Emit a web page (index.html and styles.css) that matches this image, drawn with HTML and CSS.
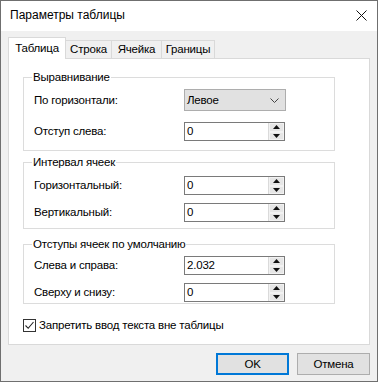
FILE: index.html
```html
<!DOCTYPE html>
<html lang="ru">
<head>
<meta charset="utf-8">
<title>Параметры таблицы</title>
<link rel="stylesheet" href="styles.css">
</head>
<body>
<div class="window">
  <div class="titlebar">
    <span class="title">Параметры таблицы</span>
    <svg class="close" width="11" height="11" viewBox="0 0 11 11"><path d="M0.5 0.5L10.5 10.5M10.5 0.5L0.5 10.5" stroke="#111" stroke-width="1"/></svg>
  </div>
  <div class="body">
    <div class="tabs">
      <div class="tab active w1">Таблица</div>
      <div class="tab w2">Строка</div>
      <div class="tab w3">Ячейка</div>
      <div class="tab w4">Границы</div>
    </div>
    <div class="panel">
      <div class="group g1">
        <div class="legend">Выравнивание</div>
        <div class="row r1a">
          <span class="label">По горизонтали:</span>
          <div class="select"><span>Левое</span><svg width="9" height="5" viewBox="0 0 9 5"><path d="M0.5 0.5L4.5 4.5L8.5 0.5" fill="none" stroke="#444" stroke-width="1"/></svg></div>
        </div>
        <div class="row r1b">
          <span class="label">Отступ слева:</span>
          <div class="spin"><span class="val">0</span><div class="spinbtns"><div class="sb"><svg width="7" height="4" viewBox="0 0 7 4"><path d="M3.5 0L7 4H0Z" fill="#111"/></svg></div><div class="sb"><svg width="7" height="4" viewBox="0 0 7 4"><path d="M0 0H7L3.5 4Z" fill="#111"/></svg></div></div></div>
        </div>
      </div>
      <div class="group g2">
        <div class="legend">Интервал ячеек</div>
        <div class="row r2a">
          <span class="label">Горизонтальный:</span>
          <div class="spin"><span class="val">0</span><div class="spinbtns"><div class="sb"><svg width="7" height="4" viewBox="0 0 7 4"><path d="M3.5 0L7 4H0Z" fill="#111"/></svg></div><div class="sb"><svg width="7" height="4" viewBox="0 0 7 4"><path d="M0 0H7L3.5 4Z" fill="#111"/></svg></div></div></div>
        </div>
        <div class="row r2b">
          <span class="label">Вертикальный:</span>
          <div class="spin"><span class="val">0</span><div class="spinbtns"><div class="sb"><svg width="7" height="4" viewBox="0 0 7 4"><path d="M3.5 0L7 4H0Z" fill="#111"/></svg></div><div class="sb"><svg width="7" height="4" viewBox="0 0 7 4"><path d="M0 0H7L3.5 4Z" fill="#111"/></svg></div></div></div>
        </div>
      </div>
      <div class="group g3">
        <div class="legend">Отступы ячеек по умолчанию</div>
        <div class="row r3a">
          <span class="label">Слева и справа:</span>
          <div class="spin"><span class="val">2.032</span><div class="spinbtns"><div class="sb"><svg width="7" height="4" viewBox="0 0 7 4"><path d="M3.5 0L7 4H0Z" fill="#111"/></svg></div><div class="sb"><svg width="7" height="4" viewBox="0 0 7 4"><path d="M0 0H7L3.5 4Z" fill="#111"/></svg></div></div></div>
        </div>
        <div class="row r3b">
          <span class="label">Сверху и снизу:</span>
          <div class="spin"><span class="val">0</span><div class="spinbtns"><div class="sb"><svg width="7" height="4" viewBox="0 0 7 4"><path d="M3.5 0L7 4H0Z" fill="#111"/></svg></div><div class="sb"><svg width="7" height="4" viewBox="0 0 7 4"><path d="M0 0H7L3.5 4Z" fill="#111"/></svg></div></div></div>
        </div>
      </div>
      <div class="check">
        <span class="box"><svg width="11" height="11" viewBox="0 0 11 11"><path d="M1.5 5.5L4.2 8.3L9.5 2" fill="none" stroke="#222" stroke-width="1.1"/></svg></span>
        <span class="checklabel">Запретить ввод текста вне таблицы</span>
      </div>
    </div>
    <div class="buttons">
      <div class="btn ok">OK</div>
      <div class="btn">Отмена</div>
    </div>
  </div>
</div>
</body>
</html>
```

FILE: styles.css
```css
* { box-sizing: border-box; }
html, body { margin: 0; padding: 0; }
body {
  font-family: "Liberation Sans", Arial, sans-serif;
  font-size: 11.5px;
  letter-spacing: -0.2px;
  color: #000;
  background: #fff;
}
.window {
  width: 378px;
  height: 382px;
  border: 1px solid #6f6f6f;
  background: #f0f0f0;
  display: flex;
  flex-direction: column;
}
.titlebar {
  height: 30px;
  background: #fff;
  display: flex;
  align-items: center;
  justify-content: space-between;
  padding: 0 10px 0 9px;
  flex-shrink: 0;
}
.title {
  font-size: 12px;
  letter-spacing: 0;
  line-height: 15px;
  padding-bottom: 1px;
}
.close { display: block; margin-bottom: 1px; }
.body {
  padding: 6px 7px 0 7px;
  display: flex;
  flex-direction: column;
}
.tabs {
  display: flex;
  align-items: flex-end;
  height: 21px;
}
.tab {
  height: 18px;
  border: 1px solid #d9d9d9;
  border-bottom: none;
  background: #f0f0f0;
  text-align: center;
  line-height: 15px;
  padding-top: 1px;
  margin-left: -1px;
}
.tab.active {
  height: 22px;
  margin-left: 0;
  margin-bottom: -1px;
  background: #fff;
  position: relative;
  z-index: 1;
  padding-top: 3px;
}
.w1 { width: 58px; }
.w2 { width: 47px; }
.w3 { width: 51px; }
.w4 { width: 54px; }
.panel {
  background: #fff;
  border: 1px solid #d9d9d9;
  padding: 18px 14px 12px 14px;
}
.group {
  width: 312px;
  border: 1px solid #dcdcdc;
  padding: 0 0 0 10px;
}
.legend {
  margin-top: -8px;
  margin-left: -2px;
  padding: 0 1px;
  width: max-content;
  background: #fff;
  line-height: 15px;
  height: 15px;
}
.g1 { padding-bottom: 9px; }
.g2 { margin-top: 11px; padding-bottom: 6px; }
.g3 { margin-top: 15px; padding-bottom: 1px; }
.row {
  display: flex;
  align-items: center;
}
.label { width: 150px; line-height: 15px; }
.r1a { margin-top: 4px; }
.r1b { margin-top: 11px; }
.r2a { margin-top: 6px; }
.r2b { margin-top: 8px; }
.r3a { margin-top: 4px; }
.r3b { margin-top: 8px; }
.select {
  width: 102px;
  height: 22px;
  background: #e1e1e1;
  border: 1px solid #adadad;
  display: flex;
  align-items: center;
  justify-content: space-between;
  padding: 0 6px 0 2px;
}
.select svg { display: block; }
.spin {
  width: 101px;
  height: 19px;
  border: 1px solid #7a7a7a;
  background: #fff;
  display: flex;
  align-items: center;
  justify-content: space-between;
  padding-left: 2px;
}
.val { line-height: 15px; }
.spinbtns {
  width: 16px;
  height: 17px;
  display: flex;
  flex-direction: column;
  border-left: 1px solid #dadada;
}
.sb {
  flex: 1;
  background: #e6e6e6;
  border: 1px solid #f2f2f2;
  display: flex;
  align-items: center;
  justify-content: center;
}
.sb svg { display: block; }
.check {
  margin-top: 15px;
  display: flex;
  align-items: center;
  height: 13px;
}
.box {
  width: 13px;
  height: 13px;
  border: 1px solid #333;
  background: #fff;
  display: flex;
  align-items: center;
  justify-content: center;
  margin-right: 3px;
}
.box svg { display: block; }
.checklabel { line-height: 15px; }
.buttons {
  margin-top: 8px;
  display: flex;
  justify-content: flex-end;
  gap: 8px;
}
.btn {
  width: 73px;
  height: 22px;
  background: #e1e1e1;
  border: 1px solid #adadad;
  display: flex;
  align-items: center;
  justify-content: center;
  line-height: 15px;
}
.btn.ok { border: 2px solid #0078d7; }
```
